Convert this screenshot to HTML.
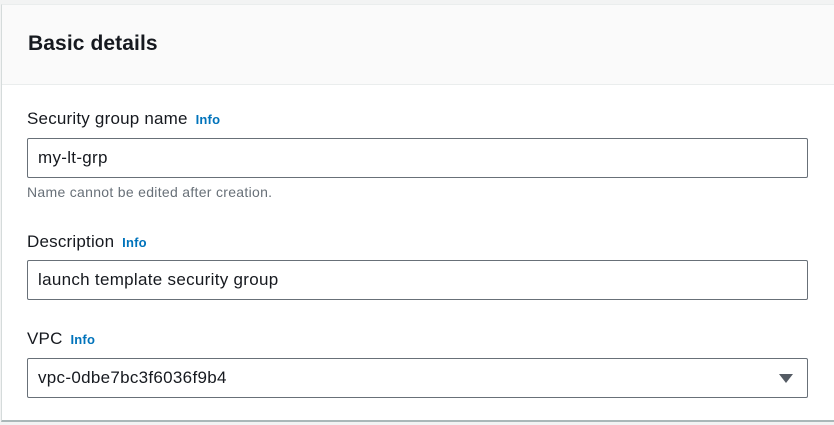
<!DOCTYPE html>
<html><head><style>
html,body{margin:0;padding:0;width:834px;height:425px;overflow:hidden;background:#f2f3f3;font-family:"Liberation Sans",sans-serif;color:#16191f}
.card{position:absolute;left:1px;top:4px;width:840px;height:418px;background:#fff;border-left:1px solid #d5dbdb;border-top:1px solid #eaeded;border-bottom:2px solid #aab7b8;box-sizing:border-box}
.hdr{height:80px;background:#fafafa;border-bottom:1px solid #eaeded;box-sizing:border-box}
.hdr h2{margin:0;position:absolute;left:26px;top:27px;font-size:21px;font-weight:bold;letter-spacing:0.1px}
.lbl{position:absolute;left:27px;font-size:17px;letter-spacing:0.2px}
.lbl b{color:#0073bb;font-size:13px;font-weight:bold;margin-left:3px}
.inp{position:absolute;left:27px;width:781px;height:40px;border:1px solid #687078;border-radius:2px;box-sizing:border-box;font-size:17px;padding-left:10px;line-height:38px;background:#fff;letter-spacing:0.3px}
.hint{position:absolute;left:27px;top:184px;font-size:14px;color:#687078;letter-spacing:0.3px}
.arrow{position:absolute;right:14px;top:15px;width:0;height:0;border-left:7px solid transparent;border-right:7px solid transparent;border-top:9px solid #545b64}
</style></head><body>
<div class="card"><div class="hdr"><h2>Basic details</h2></div></div>
<div class="lbl" style="top:109px">Security group name <b>Info</b></div>
<div class="inp" style="top:138px">my-lt-grp</div>
<div class="hint">Name cannot be edited after creation.</div>
<div class="lbl" style="top:232px">Description <b>Info</b></div>
<div class="inp" style="top:260px">launch template security group</div>
<div class="lbl" style="top:329px">VPC <b>Info</b></div>
<div class="inp" style="top:358px">vpc-0dbe7bc3f6036f9b4<div class="arrow"></div></div>
</body></html>
